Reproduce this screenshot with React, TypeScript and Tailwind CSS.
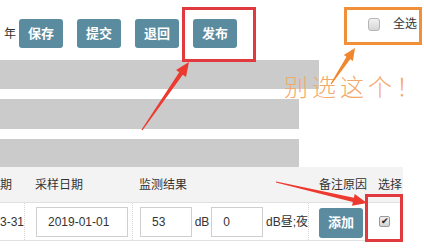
import React from "react";

const cjk = "font-['Liberation_Sans','Noto_Sans_CJK_SC',sans-serif]";

function arrowPoints(x1: number, y1: number, x2: number, y2: number, head: number, half: number, neck: number, tail: number) {
  const dx = x2 - x1;
  const dy = y2 - y1;
  const len = Math.hypot(dx, dy);
  const ux = dx / len;
  const uy = dy / len;
  const nx = -uy;
  const ny = ux;
  const bx = x2 - ux * head;
  const by = y2 - uy * head;
  const pts = [
    [x1 + nx * tail, y1 + ny * tail],
    [bx + nx * neck, by + ny * neck],
    [bx + nx * half, by + ny * half],
    [x2, y2],
    [bx - nx * half, by - ny * half],
    [bx - nx * neck, by - ny * neck],
    [x1 - nx * tail, y1 - ny * tail],
  ];
  return pts.map((p) => `${p[0].toFixed(1)},${p[1].toFixed(1)}`).join(" ");
}

function ActionButton({ label, className = "" }: { label: string; className?: string }) {
  return (
    <button
      type="button"
      className={`flex h-[29px] w-[44px] items-center justify-center rounded-[3px] bg-[#5a8b9f] text-[13px] font-semibold text-white ${className}`}
    >
      {label}
    </button>
  );
}

function Box({ value, className = "" }: { value: string; className?: string }) {
  return (
    <div className={`flex h-[30px] items-center border border-[#cfcfcf] bg-white pl-[11px] text-[12px] text-[#333] ${className}`}>
      {value}
    </div>
  );
}

export default function App() {
  return (
    <div className={`relative h-[251px] w-[424px] overflow-hidden bg-white text-[#333] ${cjk}`}>
      {/* toolbar */}
      <div className="flex h-[60px] items-start">
        <div className="flex items-center pl-[4px] pt-[19px]">
          <span className="w-[15px] text-[12px]">年</span>
          <div className="flex gap-[14px]">
            <ActionButton label="保存" />
            <ActionButton label="提交" />
            <ActionButton label="退回" />
            <ActionButton label="发布" />
          </div>
        </div>
        <label className="ml-auto mr-[7px] mt-[18px] flex items-center">
          <span className="h-[13px] w-[12px] rounded-[3px] border border-[#b5b5b5] bg-gradient-to-b from-[#f2f2f2] to-[#d6d6d6]" />
          <span className="ml-[13px] text-[12px] leading-[13px]">全选</span>
        </label>
      </div>

      {/* blurred rows */}
      <div className="flex flex-col gap-[10px]">
        <div className="h-[29px] w-[319px] bg-[#cbcbcb]" />
        <div className="h-[30px] w-[299px] bg-[#cbcbcb]" />
        <div className="h-[28px] w-[299px] bg-[#cbcbcb]" />
      </div>

      {/* table */}
      <div className="w-[403px] border-b border-[#e0e0e0] text-[12px]">
        <div className="grid h-[36px] grid-cols-[25px_108px_176px_59px_35px] items-center border-b border-[#e0e0e0] bg-[#f3f3f3]">
          <div className="whitespace-nowrap">期</div>
          <div className="pl-[10px]">采样日期</div>
          <div className="pl-[6px]">监测结果</div>
          <div className="pl-[10px]">备注原因</div>
          <div className="pl-[10px]">选择</div>
        </div>
        <div className="grid h-[37px] grid-cols-[25px_108px_176px_59px_35px] items-center">
          <div className="flex h-full items-center whitespace-nowrap border-r border-dotted border-[#d6d6d6]">
            3-31
          </div>
          <div className="flex h-full items-center border-r border-dotted border-[#d6d6d6] pl-[11px]">
            <Box value="2019-01-01" className="w-[92px]" />
          </div>
          <div className="flex h-full items-center whitespace-nowrap border-r border-dotted border-[#d6d6d6] pl-[7px]">
            <Box value="53" className="w-[52px]" />
            <span className="ml-[3px]">dB</span>
            <Box value="0" className="ml-[2px] w-[52px]" />
            <span className="ml-[3px]">dB昼;夜</span>
          </div>
          <div className="flex h-full items-center border-r border-dotted border-[#d6d6d6] pl-[10px] pt-[3px]">
            <ActionButton label="添加" className="h-[30px]" />
          </div>
          <div className="flex h-full items-center pl-[11px]">
            <span className="flex h-[11px] w-[11px] items-center justify-center rounded-[2px] border border-[#9a9a9a] bg-gradient-to-b from-[#f0f0f0] to-[#d4d4d4] text-[9px] leading-none text-[#222]">
              ✔
            </span>
          </div>
        </div>
      </div>

      {/* annotations */}
      <div className="pointer-events-none absolute left-[182px] top-[7px] h-[55px] w-[74px] border-[3px] border-[#e0393e]" />
      <div className="pointer-events-none absolute left-[365px] top-[194px] h-[48px] w-[38px] border-[3px] border-[#e0393e]" />
      <div className="pointer-events-none absolute left-[344px] top-[7px] h-[38px] w-[78px] border-[3px] border-[#f0913a]" />
      <div className="pointer-events-none absolute left-[284px] top-[74px] text-[24px] font-light leading-[28px] tracking-[4px] text-[#f3a96b]">
        别选这个！
      </div>
      <svg className="pointer-events-none absolute left-0 top-0" width="424" height="251" viewBox="0 0 424 251">
        <polygon points={arrowPoints(142, 130, 189, 62, 14, 6, 2.2, 0.6)} fill="#ec3a30" />
        <polygon points={arrowPoints(276, 182, 367, 203, 14, 6, 2.2, 0.6)} fill="#ec3a30" />
        <polygon points={arrowPoints(331, 84, 355, 48, 12, 5.5, 2.2, 0.6)} fill="#f0872e" />
      </svg>
    </div>
  );
}
